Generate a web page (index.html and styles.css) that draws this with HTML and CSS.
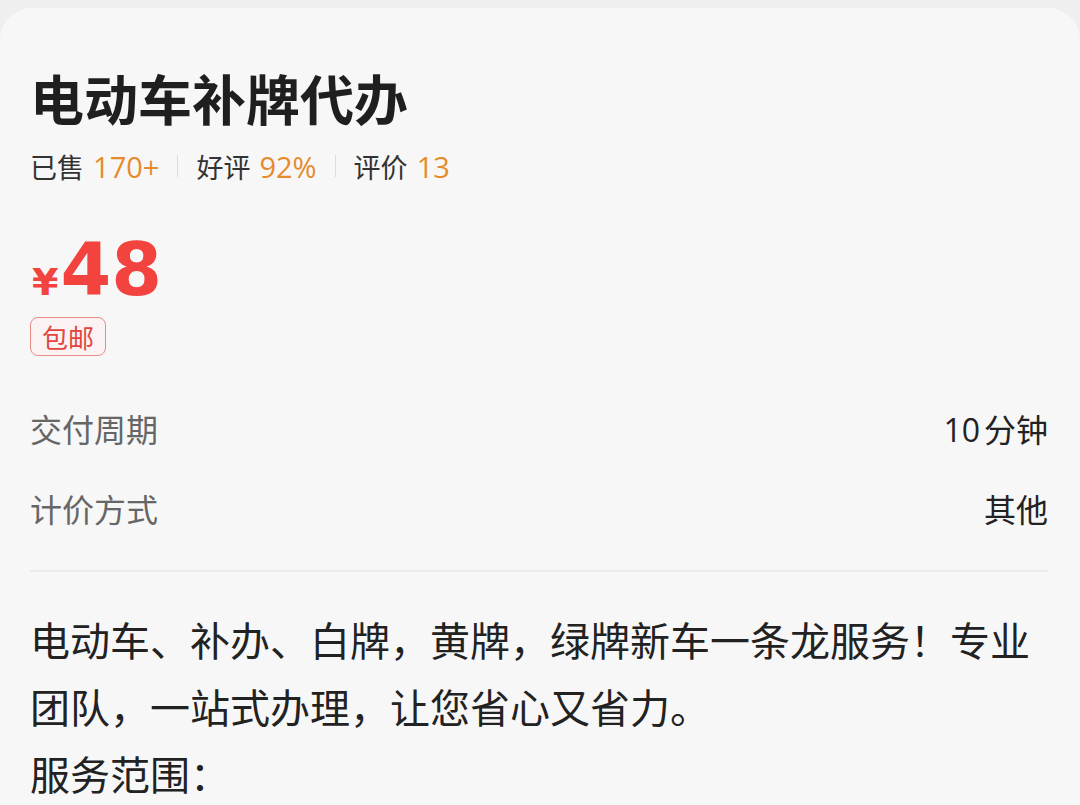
FILE: index.html
```html
<!DOCTYPE html>
<html lang="zh-CN">
<head>
  <meta charset="UTF-8" />
  <meta name="viewport" content="width=device-width, initial-scale=1.0"/>
  <title>电动车补牌代办</title>
  <link rel="stylesheet" href="styles.css">
</head>
<body>

  <div class="detail-card">
    <h1 class="title">电动车补牌代办</h1>

    <div class="stats">
      <span class="stat">已售 <em>170+</em></span>
      <span class="stat-sep"></span>
      <span class="stat">好评 <em>92%</em></span>
      <span class="stat-sep"></span>
      <span class="stat">评价 <em>13</em></span>
    </div>

    <div class="price">
      <span class="price-sign">¥</span><span class="price-num">48</span>
    </div>
    <span class="tag">包邮</span>

    <div class="info-list">
      <div class="info-row">
        <span class="info-label">交付周期</span>
        <span class="info-value"><span class="num">10</span>分钟</span>
      </div>
      <div class="info-row">
        <span class="info-label">计价方式</span>
        <span class="info-value">其他</span>
      </div>
    </div>

    <div class="desc">
      <p>电动车、补办、白牌，黄牌，绿牌新车一条龙服务！专业团队，一站式办理，让您省心又省力。</p>
      <p>服务范围：</p>
    </div>
  </div>

</body>
</html>
```

FILE: styles.css
```css
body {
  margin: 0;
  padding: 0;
  background-color: #efefef;
  color: #222;
  font-family: "Noto Sans CJK SC", "Noto Sans", sans-serif;
}

.detail-card {
  margin-top: 8px;
  background-color: #f7f7f7;
  border-radius: 32px 32px 0 0;
  padding: 0 32px 40px 30px;
  min-height: 900px;
}

.title {
  margin: 0;
  padding-top: 58px;
  font-size: 54px;
  line-height: 64px;
  font-weight: bold;
  color: #1f1f1f;
}

.stats {
  display: flex;
  align-items: center;
  margin-top: 16px;
  height: 40px;
  font-size: 27px;
  color: #333;
}

/* numbers use a wider latin face */
.stats em {
  font-style: normal;
  font-family: "Open Sans", sans-serif;
  font-size: 29px;
  margin-left: 3px;
  color: #e68b2c;
}

.stat-sep {
  width: 1px;
  height: 22px;
  background-color: #dcdcdc;
  margin: 0 18px;
}

.price {
  margin-top: 44px;
  color: #f2433f;
  font-family: "DejaVu Sans", sans-serif;
  font-weight: bold;
  line-height: 80px;
  height: 80px;
}

.price-sign {
  font-size: 38px;
  margin-left: 2px;
  margin-right: 2px;
}

.price-num {
  font-size: 73px;
}

.tag {
  display: inline-block;
  margin-top: 7px;
  padding: 0 11px;
  height: 37px;
  line-height: 37px;
  font-size: 26px;
  color: #e2453f;
  border: 1px solid #e98a87;
  border-radius: 8px;
  background-color: #fbf3f3;
}

.info-list {
  margin-top: 32px;
  padding-bottom: 22px;
  border-bottom: 2px solid #ebebeb;
}

.info-row {
  display: flex;
  justify-content: space-between;
  align-items: center;
  height: 80px;
  font-size: 32px;
}

.info-label {
  color: #666;
}

.info-value {
  color: #222;
}

.info-value .num {
  font-family: "Open Sans", sans-serif;
  margin-right: 4px;
}

.desc {
  margin-top: 34px;
  font-size: 40px;
  line-height: 67px;
  color: #222;
}

.desc p {
  margin: 0;
}
```
